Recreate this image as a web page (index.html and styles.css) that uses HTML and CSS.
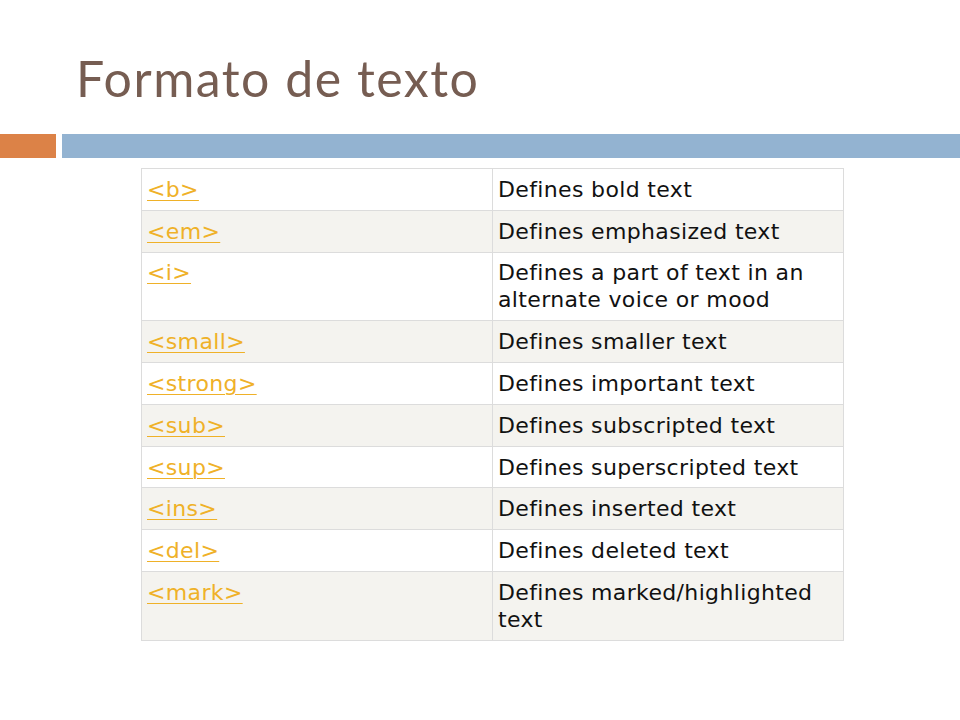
FILE: index.html
```html
<!DOCTYPE html>
<html>
<head>
<meta charset="utf-8">
<link rel="stylesheet" href="styles.css">
</head>
<body>
<div class="slide">
  <h1 class="title">Formato de texto</h1>
  <div class="rule">
    <div class="rule-orange"></div>
    <div class="rule-blue"></div>
  </div>
  <table class="tags">
    <tr><td class="tag"><a href="#">&lt;b&gt;</a></td><td class="desc">Defines bold text</td></tr>
    <tr class="alt"><td class="tag"><a href="#">&lt;em&gt;</a></td><td class="desc">Defines emphasized text</td></tr>
    <tr><td class="tag"><a href="#">&lt;i&gt;</a></td><td class="desc">Defines a part of text in an alternate voice or mood</td></tr>
    <tr class="alt"><td class="tag"><a href="#">&lt;small&gt;</a></td><td class="desc">Defines smaller text</td></tr>
    <tr><td class="tag"><a href="#">&lt;strong&gt;</a></td><td class="desc">Defines important text</td></tr>
    <tr class="alt"><td class="tag"><a href="#">&lt;sub&gt;</a></td><td class="desc">Defines subscripted text</td></tr>
    <tr><td class="tag"><a href="#">&lt;sup&gt;</a></td><td class="desc">Defines superscripted text</td></tr>
    <tr class="alt"><td class="tag"><a href="#">&lt;ins&gt;</a></td><td class="desc">Defines inserted text</td></tr>
    <tr><td class="tag"><a href="#">&lt;del&gt;</a></td><td class="desc">Defines deleted text</td></tr>
    <tr class="alt"><td class="tag"><a href="#">&lt;mark&gt;</a></td><td class="desc">Defines marked/highlighted text</td></tr>
  </table>
</div>
</body>
</html>
```
FILE: styles.css
```css
html, body {
  margin: 0;
  padding: 0;
  background: #ffffff;
}
.slide {
  width: 960px;
  height: 720px;
  padding-top: 50px;
  box-sizing: border-box;
}
.title {
  margin: 0 0 0 76px;
  font-family: "Lato", "Open Sans", sans-serif;
  font-weight: 400;
  font-size: 50px;
  line-height: 56px;
  color: #765d52;
  letter-spacing: 1.5px;
}
.rule {
  display: flex;
  gap: 6px;
  margin-top: 28px;
  height: 24px;
}
.rule-orange {
  width: 56px;
  background: #dc8247;
}
.rule-blue {
  flex: 1;
  background: #93b3d1;
}
.tags {
  margin: 10px 0 0 141px;
  width: 703px;
  border-collapse: collapse;
  font-family: "DejaVu Sans", Verdana, sans-serif;
  font-size: 22px;
  letter-spacing: 0.35px;
  line-height: 27px;
  color: #111111;
}
.tags td {
  border: 1px solid #dcdcdc;
  vertical-align: top;
  padding: 6.9px 5px 6.9px 5px;
}
.tags .tag {
  width: 340px;
}
.tags tr.alt td {
  background: #f4f3ef;
}
.tags a {
  color: #efb128;
  text-decoration: underline;
  text-decoration-thickness: 1px;
  text-underline-offset: 3px;
}
```
